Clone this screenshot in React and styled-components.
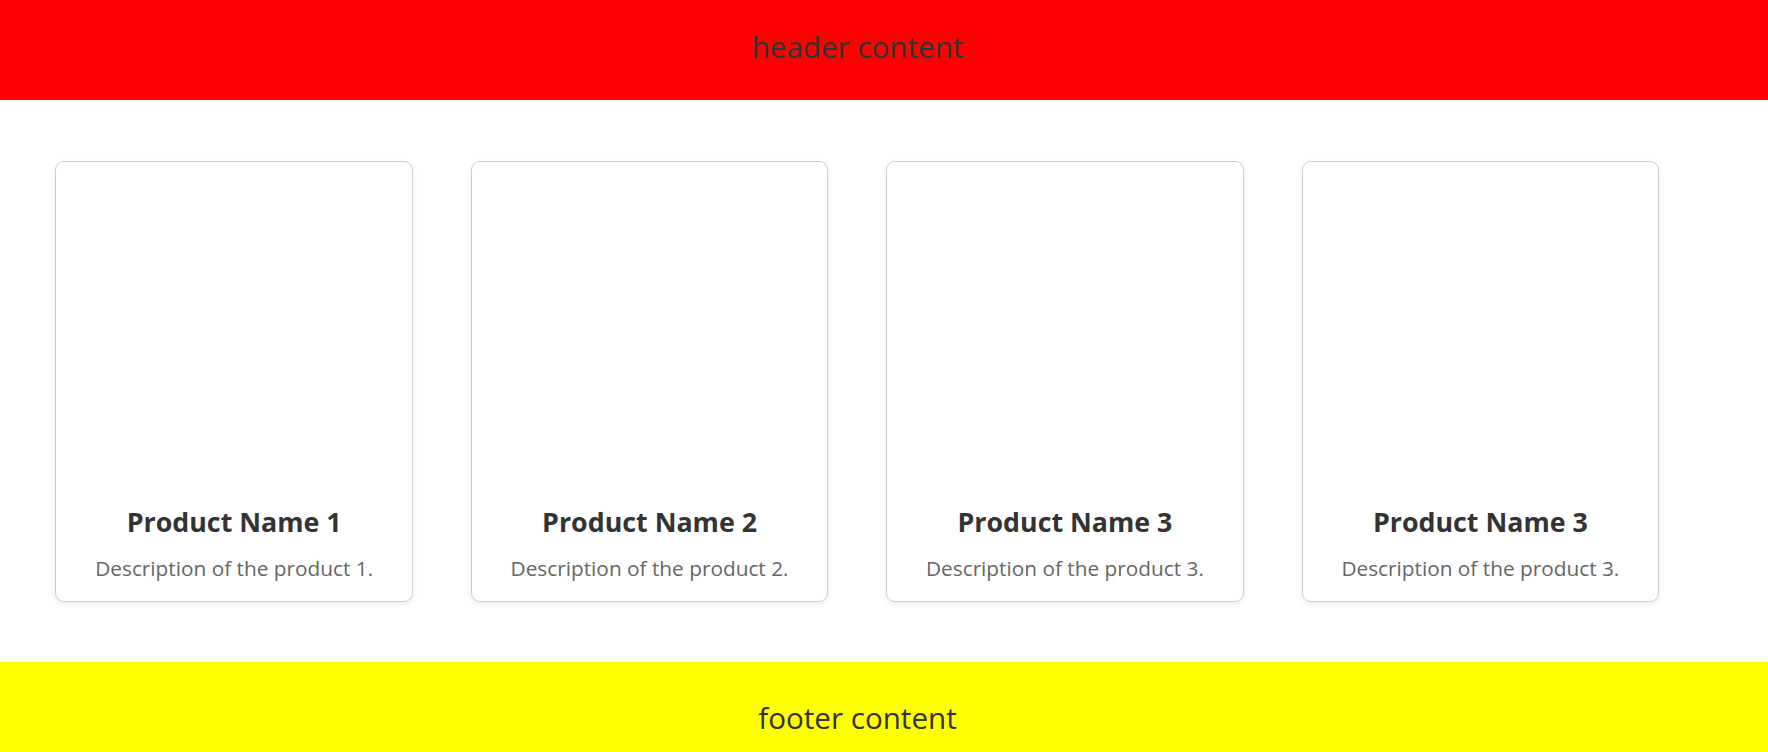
import React from "react";
import styled, { createGlobalStyle } from "styled-components";

const GlobalStyle = createGlobalStyle`
  html, body {
    margin: 0;
    padding: 0;
    background: #ffffff;
    font-family: "Open Sans", "Noto Sans", Arial, sans-serif;
    color: #333333;
  }
  * { box-sizing: border-box; }
`;

const Page = styled.div`
  display: flex;
  flex-direction: column;
  min-height: 100vh;
`;

const Band = styled.div`
  height: 100px;
  flex-shrink: 0;
  background: ${(p) => p.$bg};
  padding: ${(p) => p.$pt}px 53px 0 0;
  text-align: center;
  font-size: 29.6px;
  line-height: 40px;
  color: #333333;
`;

const Main = styled.main`
  display: flex;
  align-items: flex-start;
  gap: 57.8px;
  padding: 61px 0 60px 55.4px;
`;

const Card = styled.div`
  width: 357.6px;
  height: 441px;
  flex-shrink: 0;
  display: flex;
  flex-direction: column;
  justify-content: flex-end;
  align-items: center;
  padding: 0 12px 19px;
  border: 1px solid #cfcfcf;
  border-radius: 9px;
  background: #ffffff;
  box-shadow: 0 2px 5px rgba(0, 0, 0, 0.08);
`;

const Name = styled.h3`
  margin: 0 0 14px;
  font-size: 26.8px;
  line-height: 36px;
  font-weight: 700;
  color: #333333;
  text-align: center;
`;

const Description = styled.p`
  margin: 0;
  font-size: 20.8px;
  line-height: 28px;
  color: #666666;
  text-align: center;
  white-space: nowrap;
`;

const products = [
  { name: "Product Name 1", desc: "Description of the product 1." },
  { name: "Product Name 2", desc: "Description of the product 2." },
  { name: "Product Name 3", desc: "Description of the product 3." },
  { name: "Product Name 3", desc: "Description of the product 3." },
];

export default function App() {
  return (
    <>
      <GlobalStyle />
      <Page>
        <Band $bg="#ff0000" $pt={27}>header content</Band>
        <Main>
          {products.map((p, i) => (
            <Card key={i}>
              <Name>{p.name}</Name>
              <Description>{p.desc}</Description>
            </Card>
          ))}
        </Main>
        <Band $bg="#ffff00" $pt={36}>footer content</Band>
      </Page>
    </>
  );
}
